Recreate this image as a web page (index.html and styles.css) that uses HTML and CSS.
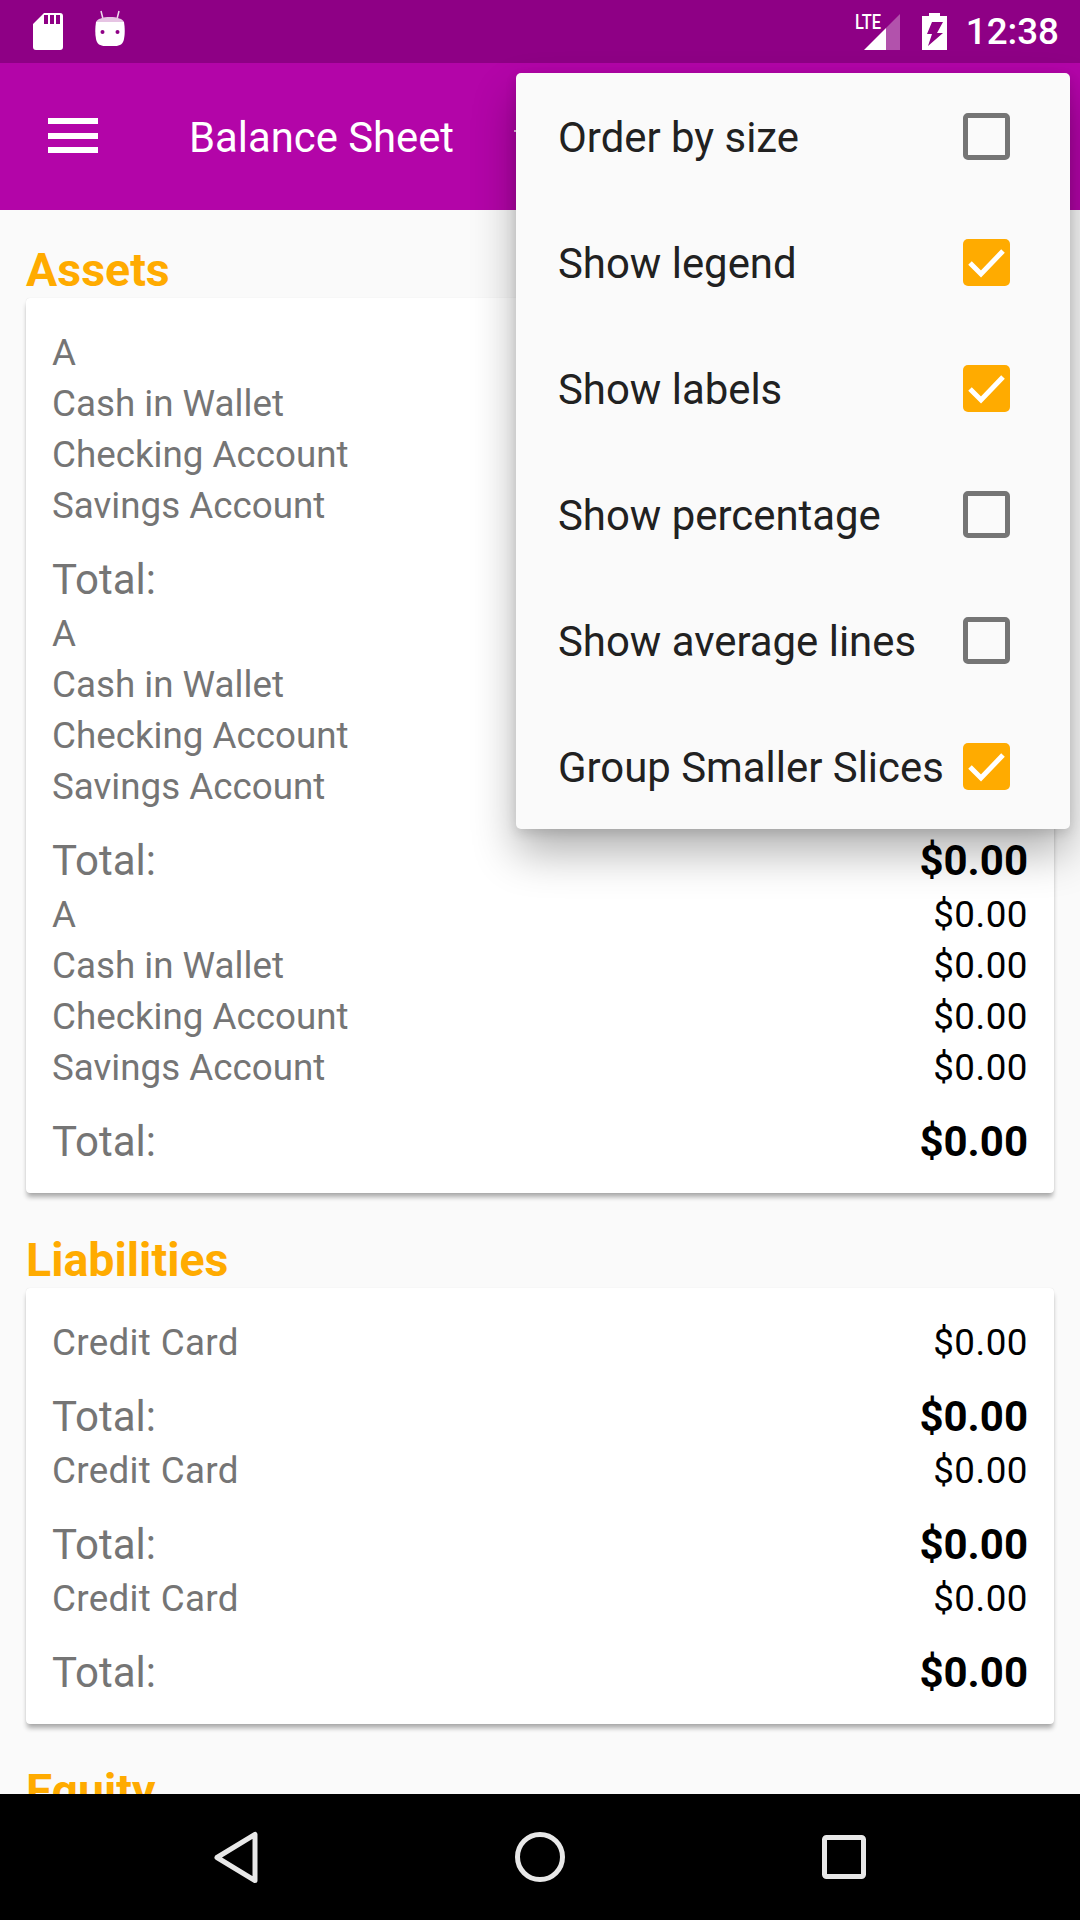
FILE: index.html
```html
<!DOCTYPE html>
<html>
<head>
<meta charset="utf-8">
<title>Balance Sheet</title>
<link rel="stylesheet" href="styles.css">
</head>
<body>
<div id="status">
	<svg class="ic-sd" width="30" height="37" viewBox="0 0 30 37"><path d="M11 0h16a3 3 0 0 1 3 3v31a3 3 0 0 1-3 3H3a3 3 0 0 1-3-3V11z M11 2v9h4V2z M17 2v9h4V2z M23 2v9h4V2z" fill="#fff" fill-rule="evenodd"/></svg>
	<svg class="ic-droid" width="30" height="38" viewBox="0 0 30 38"><path d="M6 1l2 8M24 1l-2 8" stroke="#fff" stroke-width="1.5" fill="none" opacity=".85"/><path d="M1 12C2 9 8 7 15 7s13 2 14 5z" fill="#e6c4e3"/><path d="M1 12h28c1 6 1 12 0 17c-1 5-4 7-9 7H10c-5 0-8-2-9-7c-1-5-1-11 0-17z" fill="#fff"/><circle cx="7.5" cy="22" r="2" fill="#8e0085"/><circle cx="22.5" cy="22" r="2" fill="#8e0085"/></svg>
	<div class="spacer"></div>
	<div class="signal">
		<span class="lte">LTE</span>
		<svg width="36" height="36" viewBox="0 0 36 36"><path d="M36 0v36H22V14z" fill="#fff" opacity=".32"/><path d="M22 14v22H0z" fill="#fff"/></svg>
	</div>
	<svg class="ic-batt" width="25" height="37" viewBox="0 0 25 37"><path d="M7 0h11v3h7v34H0V3h7z M10 9h11l-6 11h6L6 33l4-12H5z" fill="#fff" fill-rule="evenodd"/></svg>
	<span class="clock">12:38</span>
</div>

<div id="bar">
	<div class="burger"><i></i><i></i><i></i></div>
	<div class="title">Balance Sheet</div>
	<i class="peek"></i>
</div>

<div id="content">
	<h2 class="first">Assets</h2>
	<div class="card">
		<div class="row"><span>A</span><b>$0.00</b></div>
		<div class="row"><span>Cash in Wallet</span><b>$0.00</b></div>
		<div class="row"><span>Checking Account</span><b>$0.00</b></div>
		<div class="row"><span>Savings Account</span><b>$0.00</b></div>
		<div class="total"><span>Total:</span><b>$0.00</b></div>
		<div class="row"><span>A</span><b>$0.00</b></div>
		<div class="row"><span>Cash in Wallet</span><b>$0.00</b></div>
		<div class="row"><span>Checking Account</span><b>$0.00</b></div>
		<div class="row"><span>Savings Account</span><b>$0.00</b></div>
		<div class="total"><span>Total:</span><b>$0.00</b></div>
		<div class="row"><span>A</span><b>$0.00</b></div>
		<div class="row"><span>Cash in Wallet</span><b>$0.00</b></div>
		<div class="row"><span>Checking Account</span><b>$0.00</b></div>
		<div class="row"><span>Savings Account</span><b>$0.00</b></div>
		<div class="total"><span>Total:</span><b>$0.00</b></div>
	</div>
	<h2>Liabilities</h2>
	<div class="card">
		<div class="row cc"><span>Credit Card</span><b>$0.00</b></div>
		<div class="total"><span>Total:</span><b>$0.00</b></div>
		<div class="row cc"><span>Credit Card</span><b>$0.00</b></div>
		<div class="total"><span>Total:</span><b>$0.00</b></div>
		<div class="row cc"><span>Credit Card</span><b>$0.00</b></div>
		<div class="total"><span>Total:</span><b>$0.00</b></div>
	</div>
	<h2>Equity</h2>
</div>

<div id="nav">
	<svg width="46" height="53" viewBox="0 0 46 53"><path d="M42 3.5v46L4 26.5z" fill="none" stroke="#e8e8e8" stroke-width="5" stroke-linejoin="round"/></svg>
	<svg width="50" height="50" viewBox="0 0 50 50"><circle cx="25" cy="25" r="22.5" fill="none" stroke="#e8e8e8" stroke-width="5"/></svg>
	<svg class="ic-recent" width="44" height="44" viewBox="0 0 44 44"><rect x="2.5" y="2.5" width="39" height="39" rx="2" fill="none" stroke="#e8e8e8" stroke-width="5"/></svg>
</div>

<div id="menu">
	<div class="item"><span>Order by size</span><i class="box"></i></div>
	<div class="item"><span>Show legend</span><i class="box on"><svg width="47" height="47" viewBox="0 0 47 47"><path d="M7 24l11 11L40 12" fill="none" stroke="#fff" stroke-width="5"/></svg></i></div>
	<div class="item"><span>Show labels</span><i class="box on"><svg width="47" height="47" viewBox="0 0 47 47"><path d="M7 24l11 11L40 12" fill="none" stroke="#fff" stroke-width="5"/></svg></i></div>
	<div class="item"><span>Show percentage</span><i class="box"></i></div>
	<div class="item"><span>Show average lines</span><i class="box"></i></div>
	<div class="item"><span>Group Smaller Slices</span><i class="box on"><svg width="47" height="47" viewBox="0 0 47 47"><path d="M7 24l11 11L40 12" fill="none" stroke="#fff" stroke-width="5"/></svg></i></div>
</div>
</body>
</html>
```
FILE: styles.css
```css
html,body{margin:0;padding:0;height:1920px;overflow:hidden;}
body{position:relative;display:flex;flex-direction:column;background:#fafafa;font-family:Roboto,sans-serif;}
svg{display:block;}

#status{height:63px;flex:none;display:flex;align-items:center;background:#8e0085;color:#fff;padding:0 21px 0 33px;box-sizing:border-box;}
.ic-sd{align-self:flex-start;margin-top:13px;}
.ic-droid{align-self:flex-start;margin:10px 0 0 32px;}
.spacer{flex:1;}
.signal{position:relative;width:45px;height:36px;margin-right:22px;display:flex;justify-content:flex-end;}
.lte{position:absolute;left:0;top:-1px;font-size:21px;line-height:18px;font-weight:500;transform:scaleX(.78);transform-origin:left;}
.clock{font-size:36.75px;font-weight:500;margin-left:19px;}

#bar{height:147px;flex:none;display:flex;align-items:center;background:#b305a8;color:#fff;padding-left:48px;}
.burger{width:50px;margin-top:-2px;}
.burger i{display:block;height:6px;background:#fff;margin-bottom:8.5px;}
.burger i:last-child{margin-bottom:0;}
.title{margin-left:91px;padding-top:2px;font-size:41.8px;}
.peek{position:absolute;left:514px;top:130px;width:2px;height:2px;background:#f0c0ec;}

#content{flex:1;min-height:0;overflow:hidden;padding:0 26px;}
h2{margin:47px 0 0;height:48px;line-height:40px;font-size:46.5px;font-weight:700;color:#ffab00;}
h2.first{margin-top:40px;}
.card{background:#fff;border-radius:4px;padding:29px 26px 23px 26px;box-shadow:0 0 1px rgba(0,0,0,.15),0 5px 5px -1px rgba(0,0,0,.32);}
.row,.total{display:flex;justify-content:space-between;}
.row{height:51px;line-height:51px;font-size:36.75px;color:#757575;}
.row b{font-weight:400;color:#000;letter-spacing:.5px;}
.row.cc span{letter-spacing:.33px;}
.total{padding-top:20px;height:57px;line-height:57px;font-size:42px;color:#757575;}
.total b{font-weight:700;color:#000;}

#nav{height:126px;flex:none;background:#000;display:flex;align-items:center;gap:256px;padding-left:213px;}
.ic-recent{margin-left:1px;}

#menu{position:absolute;left:516px;top:73px;width:554px;height:756px;background:#fafafa;border-radius:5px;box-shadow:0 24px 44px rgba(0,0,0,.3),0 4px 12px rgba(0,0,0,.12);}
.item{height:126px;display:flex;align-items:center;justify-content:space-between;padding:0 60px 0 42px;font-size:41.9px;color:#212121;}
.item span{padding-top:2px;}
.box{width:47px;height:47px;box-sizing:border-box;border:5px solid #757575;border-radius:5px;}
.box.on{border:0;background:#ffab00;}
```
